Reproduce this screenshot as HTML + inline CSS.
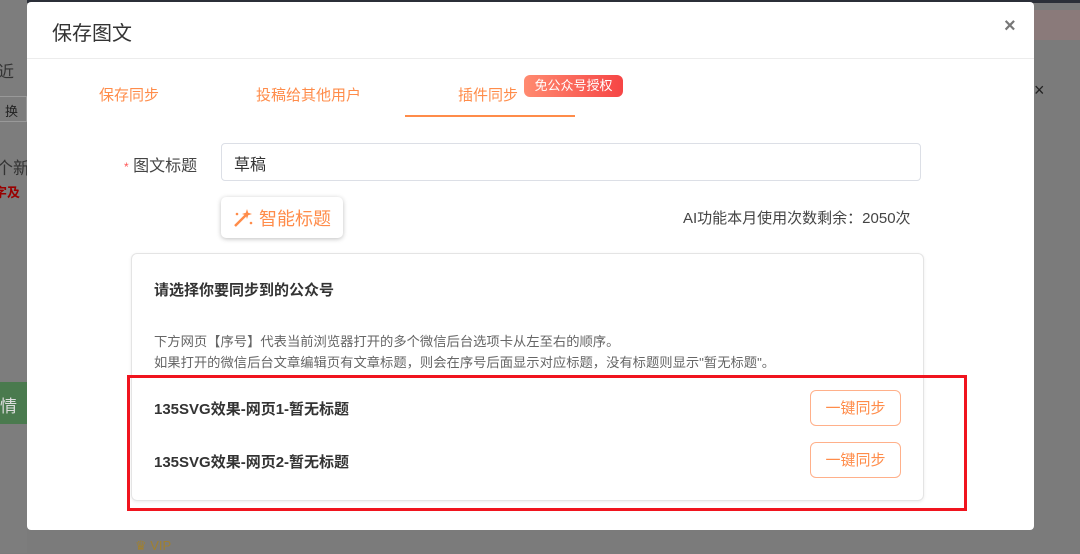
<!DOCTYPE html>
<html><head><meta charset="utf-8"><style>
*{margin:0;padding:0;box-sizing:border-box}
body{width:1080px;height:553px;overflow:hidden;background:#7b7b7b;font-family:"Liberation Sans","Noto Sans CJK SC",sans-serif;position:relative}
.a{position:absolute}
</style></head><body>
<div class="a" style="left:0;top:0;width:1080px;height:3px;background:#2b2f38"></div>
<div class="a" style="left:0;top:0;width:27px;height:553px;background:#7d7d7d"></div>
<div class="a" style="left:0;top:58px;color:#333;font-size:16px;left:-2px">近</div>
<div class="a" style="left:0;top:96px;width:27px;height:26px;border:1px solid #999;border-left:none;font-size:13px;color:#222;padding:4px 0 0 5px">换</div>
<div class="a" style="left:-4px;top:154px;color:#333;font-size:17px">个新</div>
<div class="a" style="left:-6px;top:182px;color:#900;font-size:13px;font-weight:bold">字及</div>
<div class="a" style="left:0;top:382px;width:27px;height:42px;background:#4a7a4e;color:#ddd;font-size:17px;padding-top:10px">情</div>
<div class="a" style="left:135px;top:538px;color:#a08030;font-size:13px">♛ VIP</div>
<div class="a" style="left:1034px;top:80px;color:#222;font-size:18px">×</div>
<div class="a" style="left:1034px;top:10px;width:46px;height:30px;background:#8a7a7a"></div>
<div class="a" style="left:27px;top:2px;width:1007px;height:528px;background:#fff;border-radius:4px"></div>
<div class="a" style="left:27px;top:58px;width:1007px;height:1px;background:#ececec"></div>
<div class="a" style="left:52px;top:17px;font-size:20px;color:#333">保存图文</div>
<div class="a" style="left:1004px;top:15px;font-size:20px;color:#777;font-weight:bold">×</div>
<div class="a" style="left:99px;top:84px;font-size:15px;color:#ff8c4a">保存同步</div>
<div class="a" style="left:256px;top:84px;font-size:15px;color:#ff8c4a">投稿给其他用户</div>
<div class="a" style="left:458px;top:84px;font-size:15px;color:#ff8c4a">插件同步</div>
<div class="a" style="left:524px;top:75px;width:99px;height:22px;border-radius:6px;background:linear-gradient(90deg,#ff8a70,#f64545);color:#fff;font-size:13px;text-align:center;line-height:22px">免公众号授权</div>
<div class="a" style="left:405px;top:115px;width:170px;height:2px;background:#ff8c4a"></div>
<div class="a" style="left:124px;top:152px;font-size:16px;color:#444"><span style="color:#f55;font-size:12px">*</span> 图文标题</div>
<div class="a" style="left:221px;top:143px;width:700px;height:38px;border:1px solid #dcdfe6;border-radius:4px;font-size:16px;color:#333;padding:7px 12px">草稿</div>
<div class="a" style="left:221px;top:197px;width:122px;height:41px;border-radius:5px;box-shadow:0 1px 5px rgba(0,0,0,.25);color:#ff8c4a;font-size:18px;padding:8px 0 0 11px">
<svg width="22" height="20" viewBox="0 0 22 20" style="vertical-align:-3px"><path d="M3 18 L14 7" stroke="#ff8c4a" stroke-width="2.5"/><path d="M15 1 L16.2 4.8 L20 6 L16.2 7.2 L15 11 L13.8 7.2 L10 6 L13.8 4.8Z" fill="#ff8c4a"/><circle cx="5" cy="6" r="1.3" fill="#ff8c4a"/><circle cx="19" cy="15" r="1.3" fill="#ff8c4a"/></svg> 智能标题</div>
<div class="a" style="left:683px;top:207px;font-size:15px;color:#444">AI功能本月使用次数剩余：2050次</div>
<div class="a" style="left:131px;top:253px;width:793px;height:248px;border:1px solid #e4e4e4;border-radius:6px;box-shadow:0 1px 3px rgba(0,0,0,.08)"></div>
<div class="a" style="left:154px;top:279px;font-size:15px;color:#333;font-weight:bold">请选择你要同步到的公众号</div>
<div class="a" style="left:154px;top:331px;font-size:13.3px;color:#666;line-height:21px;white-space:nowrap">下方网页【序号】代表当前浏览器打开的多个微信后台选项卡从左至右的顺序。<br>如果打开的微信后台文章编辑页有文章标题，则会在序号后面显示对应标题，没有标题则显示"暂无标题"。</div>
<div class="a" style="left:154px;top:398px;font-size:15px;color:#333;font-weight:bold">135SVG效果-网页1-暂无标题</div>
<div class="a" style="left:154px;top:451px;font-size:15px;color:#333;font-weight:bold">135SVG效果-网页2-暂无标题</div>
<div class="a" style="left:810px;top:390px;width:91px;height:36px;border:1px solid #ffb08a;border-radius:6px;color:#ff8c4a;font-size:15px;text-align:center;line-height:36px">一键同步</div>
<div class="a" style="left:810px;top:442px;width:91px;height:36px;border:1px solid #ffb08a;border-radius:6px;color:#ff8c4a;font-size:15px;text-align:center;line-height:36px">一键同步</div>
<div class="a" style="left:127px;top:375px;width:840px;height:136px;border:3px solid #f0141e"></div>
</body></html>
